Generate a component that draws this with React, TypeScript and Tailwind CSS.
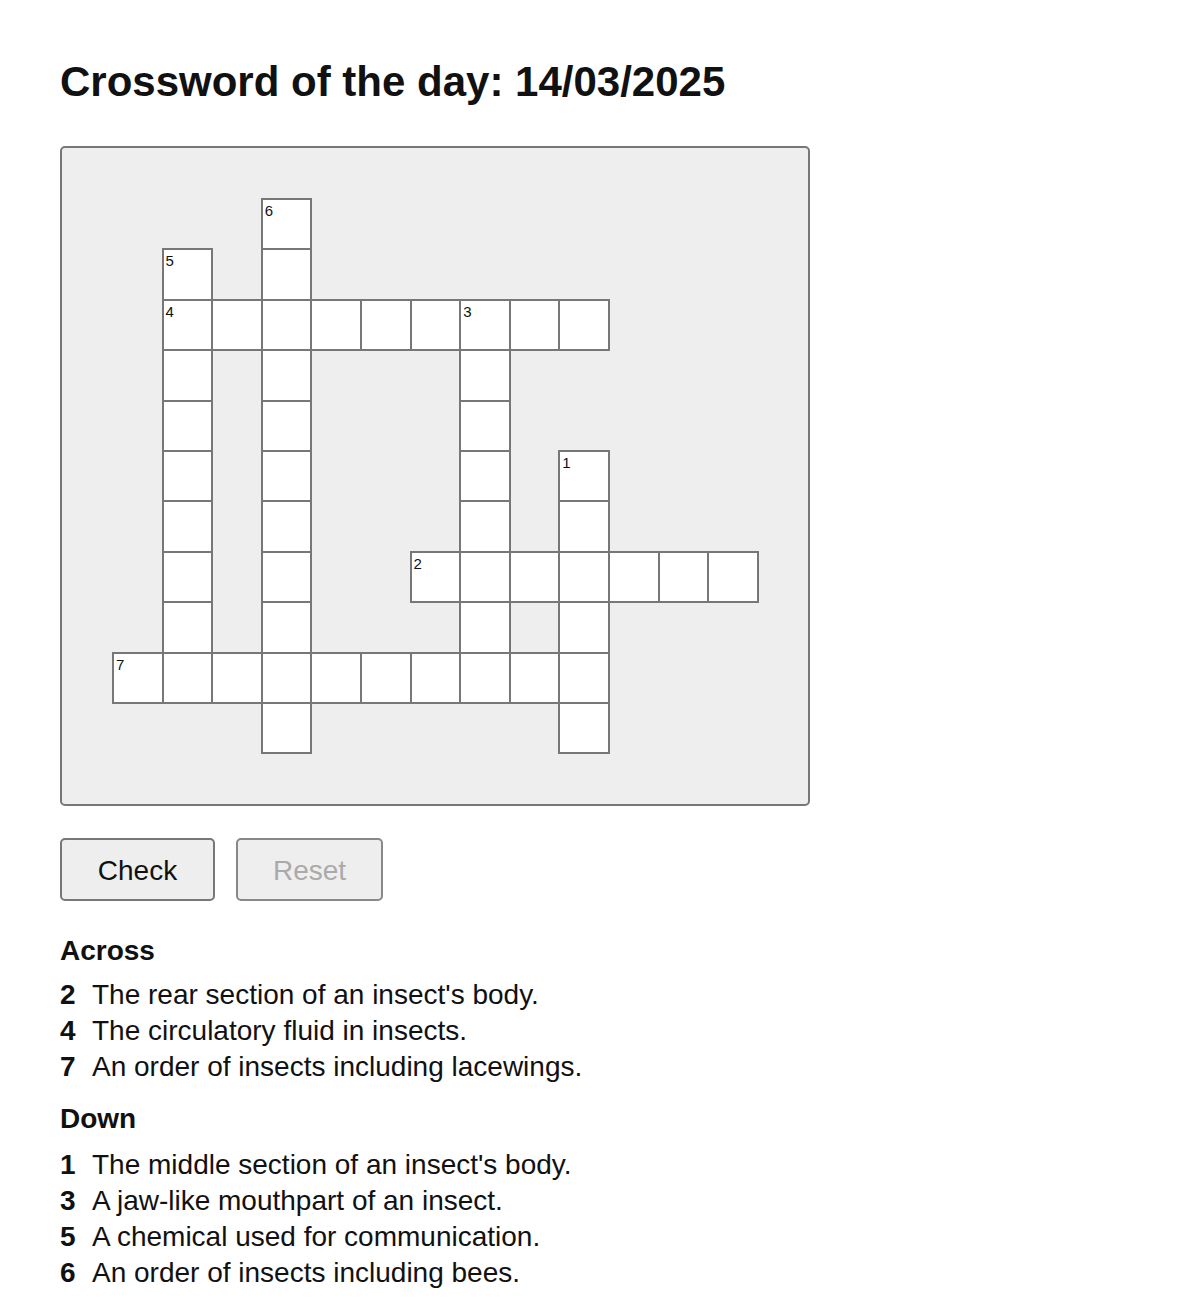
import React from "react";

type Cell = { r: number; c: number; n?: number };

const cells: Cell[] = [];
const add = (r: number, c: number, n?: number) => {
  const found = cells.find((x) => x.r === r && x.c === c);
  if (!found) cells.push({ r, c, n });
  else if (n) found.n = n;
};

// 4 across HEMOLYMPH row 2 cols 1-9
for (let c = 1; c <= 9; c++) add(2, c);
// 2 across ABDOMEN row 7 cols 6-12
for (let c = 6; c <= 12; c++) add(7, c);
// 7 across NEUROPTERA row 9 cols 0-9
for (let c = 0; c <= 9; c++) add(9, c);
// 5 down PHEROMONE col 1 rows 1-9
for (let r = 1; r <= 9; r++) add(r, 1);
// 6 down HYMENOPTERA col 3 rows 0-10
for (let r = 0; r <= 10; r++) add(r, 3);
// 3 down MANDIBLE col 7 rows 2-9
for (let r = 2; r <= 9; r++) add(r, 7);
// 1 down THORAX col 9 rows 5-10
for (let r = 5; r <= 10; r++) add(r, 9);

add(5, 9, 1);
add(7, 6, 2);
add(2, 7, 3);
add(2, 1, 4);
add(1, 1, 5);
add(0, 3, 6);
add(9, 0, 7);

const across = [
  { n: 2, t: "The rear section of an insect's body." },
  { n: 4, t: "The circulatory fluid in insects." },
  { n: 7, t: "An order of insects including lacewings." },
];
const down = [
  { n: 1, t: "The middle section of an insect's body." },
  { n: 3, t: "A jaw-like mouthpart of an insect." },
  { n: 5, t: "A chemical used for communication." },
  { n: 6, t: "An order of insects including bees." },
];

export default function App() {
  return (
    <div
      className="min-h-[1310px] bg-white pl-[60px] pt-[58px] text-[#111]"
      style={{ fontFamily: '"Liberation Sans", Arial, Helvetica, sans-serif' }}
    >
      <h1 className="text-[42px] font-bold leading-[48px]">Crossword of the day: 14/03/2025</h1>

      <div className="mt-[40px] h-[660px] w-[750px] rounded-[5px] border-2 border-[#777] bg-[#eeeeee] pl-[50px] pt-[50px]">
        <div className="grid grid-cols-[repeat(13,49.6px)] grid-rows-[repeat(11,50.4px)]">
          {cells.map((cell) => (
            <div
              key={`${cell.r}-${cell.c}`}
              className="relative h-[calc(100%+2px)] w-[calc(100%+2px)] border-2 border-[#777] bg-white"
              style={{ gridRow: cell.r + 1, gridColumn: cell.c + 1 }}
            >
              {cell.n !== undefined && (
                <span className="absolute left-[2px] top-[2px] text-[15px] leading-[17px] text-[#111]">
                  {cell.n}
                </span>
              )}
            </div>
          ))}
        </div>
      </div>

      <div className="mt-[32px] flex gap-[21px]">
        <button className="h-[63px] w-[155px] rounded-[5px] border-2 border-[#777] bg-[#eeeeee] pt-[2px] text-[28px] text-[#111]">
          Check
        </button>
        <button
          disabled
          className="h-[63px] w-[147px] rounded-[5px] border-2 border-[#888] bg-[#eeeeee] pt-[2px] text-[28px] text-[#aaa]"
        >
          Reset
        </button>
      </div>

      <h2 className="mt-[32px] text-[28px] font-bold leading-[36px]">Across</h2>
      <ul className="mt-[8px]">
        {across.map((c) => (
          <li key={c.n} className="text-[28px] leading-[36px]">
            <span className="inline-block w-[32px] font-bold">{c.n}</span>
            {c.t}
          </li>
        ))}
      </ul>

      <h2 className="mt-[16px] text-[28px] font-bold leading-[36px]">Down</h2>
      <ul className="mt-[10px]">
        {down.map((c) => (
          <li key={c.n} className="text-[28px] leading-[36px]">
            <span className="inline-block w-[32px] font-bold">{c.n}</span>
            {c.t}
          </li>
        ))}
      </ul>
    </div>
  );
}
